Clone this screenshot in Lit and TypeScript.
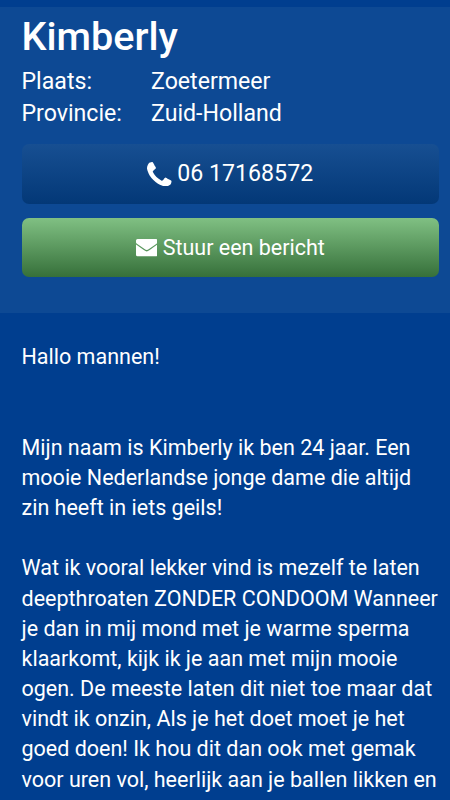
import { LitElement, html, css } from "lit";
import { customElement } from "lit/decorators.js";

const intro = ["Hallo mannen!"];

const story = [
  "Mijn naam is Kimberly ik ben 24 jaar. Een",
  "mooie Nederlandse jonge dame die altijd",
  "zin heeft in iets geils!",
  "",
  "Wat ik vooral lekker vind is mezelf te laten",
  "deepthroaten ZONDER CONDOOM Wanneer",
  "je dan in mij mond met je warme sperma",
  "klaarkomt, kijk ik je aan met mijn mooie",
  "ogen. De meeste laten dit niet toe maar dat",
  "vindt ik onzin, Als je het doet moet je het",
  "goed doen! Ik hou dit dan ook met gemak",
  "voor uren vol, heerlijk aan je ballen likken en",
];

@customElement("app-root")
export class AppRoot extends LitElement {
  static styles = css`
    :host {
      display: block;
      box-sizing: border-box;
      height: 800px;
      overflow: hidden;
      padding-top: 7px;
      background: #003e8f;
      color: #fff;
      font-family: Roboto, "Liberation Sans", sans-serif;
      font-size: 21.5px;
      line-height: 30.2px;
    }
    .card {
      box-sizing: border-box;
      height: 306px;
      padding: 6px 11px 0 21.5px;
      background: #0d4994;
    }
    h1 {
      margin: 0;
      font-size: 39.6px;
      line-height: 48px;
      font-weight: 500;
    }
    dl {
      display: grid;
      grid-template-columns: 129.5px 1fr;
      margin: 5px 0 0;
      font-size: 23.15px;
      line-height: 32px;
    }
    dd {
      margin: 0;
    }
    .button {
      display: flex;
      align-items: center;
      justify-content: center;
      gap: 5.5px;
      height: 60px;
      border-radius: 7px;
      white-space: nowrap;
    }
    .call {
      margin-top: 14px;
      font-size: 23.15px;
      background: linear-gradient(#174f92, #033877);
    }
    .message {
      box-sizing: border-box;
      height: 59px;
      margin-top: 14px;
      padding-top: 1px;
      background: linear-gradient(#80c083, #36703a);
    }
    svg {
      fill: currentColor;
    }
    .text {
      padding: 29px 0 0 21.5px;
      white-space: nowrap;
    }
    p {
      margin: 0;
    }
    .story {
      margin-top: 60.4px;
    }
    .line {
      display: block;
      height: 30.2px;
    }
  `;

  render() {
    return html`
      <section class="card">
        <h1>Kimberly</h1>
        <dl>
          <dt>Plaats:</dt>
          <dd>Zoetermeer</dd>
          <dt>Provincie:</dt>
          <dd>Zuid-Holland</dd>
        </dl>
        <div class="button call">
          <svg width="24.5" height="24.5" viewBox="0 0 1408 1408">
            <path
              d="M1408 1112q0 27-10 70.500t-21 68.500q-21 50-122 106-94 51-186 51-27 0-53-3.500t-57.500-12.500-47-14.500-55.500-20.500-49-18q-98-35-175-83-127-79-264-216t-216-264q-48-77-83-175-3-9-18-49t-20.500-55.500-14.500-47-12.500-57.500-3.500-53q0-92 51-186 56-101 106-122 25-11 68.500-21t70.500-10q14 0 21 3 18 6 53 76 11 19 30 54t35 63.500 31 53.500q3 4 17.500 25t21.500 35.500 7 28.500q0 20-28.500 50t-62 55-62 53-28.500 46q0 9 5 22.500t8.500 20.500 14 24 11.500 19q76 137 174 235t235 174q2 1 19 11.500t24 14 20.500 8.500 22.500 5q18 0 46-28.500t53-62 55-62 50-28.500q14 0 28.500 7t35.500 21.500 25 17.500q25 15 53.500 31t63.500 35 54 30q70 35 76 53 3 7 3 21z"
            />
          </svg>
          <span>06 17168572</span>
        </div>
        <div class="button message">
          <svg width="21.5" height="17.2" viewBox="0 0 22 17.6">
            <path
              d="M1.600 0H20.400A1.600 1.600 0 0 1 22 1.600V3.600Q21.800 4.300 21 4.900L13.300 10.300Q11.900 11.300 11 11.300T8.700 10.300L1 4.900Q.2 4.300 0 3.600V1.600A1.600 1.600 0 0 1 1.600 0Z"
            />
            <path
              d="M0 5.600L8 11.300Q10 12.700 11 12.700T14 11.300L22 5.600V16A1.600 1.600 0 0 1 20.400 17.600H1.600A1.600 1.600 0 0 1 0 16Z"
            />
          </svg>
          <span>Stuur een bericht</span>
        </div>
      </section>
      <section class="text">
        <p>${intro.map((line) => html`<span class="line">${line}</span>`)}</p>
        <p class="story">
          ${story.map((line) => html`<span class="line">${line}</span>`)}
        </p>
      </section>
    `;
  }
}
